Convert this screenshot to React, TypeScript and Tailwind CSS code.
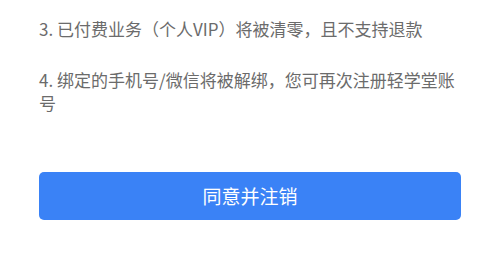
export default function App() {
  return (
    <div className="w-[500px] h-[255px] bg-white overflow-hidden" style={{ fontFamily: '"Noto Sans CJK SC", "Noto Sans", sans-serif' }}>
      <div className="px-[39px] pt-[17px] flex flex-col">
        <p className="text-[17px] leading-[23px] text-[#6b6b6b]">3. 已付费业务（个人VIP）将被清零，且不支持退款</p>
        <p className="mt-[28px] text-[17px] leading-[23px] text-[#6b6b6b]">4. 绑定的手机号/微信将被解绑，您可再次注册轻学堂账号</p>
        <button className="mt-[58px] h-[48px] w-full rounded-[5px] bg-[#3a82f6] text-white text-[19px]">同意并注销</button>
      </div>
    </div>
  );
}
